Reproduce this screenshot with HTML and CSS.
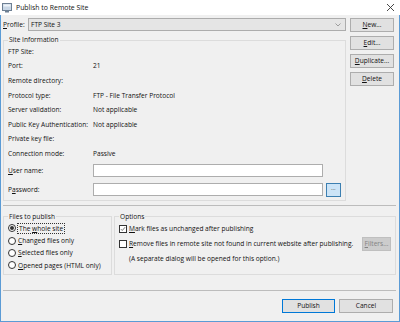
FILE: index.html
```html
<!DOCTYPE html>
<html lang="en">
<head>
  <meta charset="UTF-8" />
  <title>Publish to Remote Site</title>
  <link rel="stylesheet" href="styles.css">
</head>
<body>
  <div class="window">
    <div class="titlebar">
      <svg class="app-icon" width="10" height="10" viewBox="0 0 10 10">
        <rect x="0.5" y="0.5" width="9" height="7" fill="#c9d7e6" stroke="#6d7f93"/>
        <rect x="1.5" y="1.5" width="7" height="2" fill="#eef3f8"/>
        <rect x="3" y="8" width="4" height="1.5" fill="#6d7f93"/>
      </svg>
      <span class="title">Publish to Remote Site</span>
      <svg class="close" width="9" height="9" viewBox="0 0 9 9">
        <path d="M1 1L8 8M8 1L1 8" stroke="#333" stroke-width="0.9"/>
      </svg>
    </div>

    <div class="frame">
      <div class="top">
        <div class="site-col">
          <div class="profile-row">
            <span class="profile-label"><u>P</u>rofile:</span>
            <div class="select">
              <span>FTP Site 3</span>
              <svg width="6" height="4" viewBox="0 0 6 4"><path d="M0.5 0.5L3 3L5.5 0.5" fill="none" stroke="#8a8a8a" stroke-width="0.8"/></svg>
            </div>
          </div>

          <fieldset class="group site-info">
            <legend>Site Information</legend>
            <div class="info-row"><span class="key">FTP Site:</span><span class="val"></span></div>
            <div class="info-row"><span class="key">Port:</span><span class="val">21</span></div>
            <div class="info-row"><span class="key">Remote directory:</span><span class="val"></span></div>
            <div class="info-row"><span class="key">Protocol type:</span><span class="val">FTP - File Transfer Protocol</span></div>
            <div class="info-row"><span class="key">Server validation:</span><span class="val">Not applicable</span></div>
            <div class="info-row"><span class="key">Public Key Authentication:</span><span class="val">Not applicable</span></div>
            <div class="info-row"><span class="key">Private key file:</span><span class="val"></span></div>
            <div class="info-row"><span class="key">Connection mode:</span><span class="val">Passive</span></div>
            <div class="field-row user-row">
              <span class="key"><u>U</u>ser name:</span>
              <input class="text-input" type="text">
            </div>
            <div class="field-row pass-row">
              <span class="key">P<u>a</u>ssword:</span>
              <input class="text-input" type="text">
              <button class="dots-btn">•••</button>
            </div>
          </fieldset>
        </div>

        <div class="side-buttons">
          <button class="btn"><u>N</u>ew...</button>
          <button class="btn"><u>E</u>dit...</button>
          <button class="btn"><u>D</u>uplicate...</button>
          <button class="btn"><u>D</u>elete</button>
        </div>
      </div>

      <div class="separator"></div>

      <div class="groups">
        <fieldset class="group files">
          <legend>Files to publish</legend>
          <div class="radio-row"><span class="radio checked"></span><span class="focus-text">The <u>w</u>hole site</span></div>
          <div class="radio-row"><span class="radio"></span><span><u>C</u>hanged files only</span></div>
          <div class="radio-row"><span class="radio"></span><span><u>S</u>elected files only</span></div>
          <div class="radio-row"><span class="radio"></span><span><u>O</u>pened pages (HTML only)</span></div>
        </fieldset>

        <fieldset class="group options">
          <legend>Options</legend>
          <div class="check-row">
            <span class="checkbox checked">
              <svg width="8" height="8" viewBox="0 0 8 8"><path d="M1.2 4.2L3 6L6.8 1.6" fill="none" stroke="#333" stroke-width="0.9"/></svg>
            </span>
            <span><u>M</u>ark files as unchanged after publishing</span>
          </div>
          <div class="check-row tall">
            <span class="checkbox"></span>
            <span><u>R</u>emove files in remote site not found in current website after publishing.</span>
            <button class="btn disabled"><u>F</u>ilters...</button>
          </div>
          <div class="note">(A separate dialog will be opened for this option.)</div>
        </fieldset>
      </div>

      <div class="separator bottom-sep"></div>

      <div class="footer">
        <button class="btn default">Publish</button>
        <button class="btn cancel">Cancel</button>
      </div>
    </div>
  </div>
</body>
</html>
```

FILE: styles.css
```css
* {
  box-sizing: border-box;
  margin: 0;
  padding: 0;
}

body {
  background: #f0f0f0;
  font-family: 'Open Sans', 'Noto Sans', sans-serif;
  font-size: 6.6px;
  color: #111;
  overflow: hidden;
}

u {
  text-decoration-thickness: 0.6px;
  text-underline-offset: 1px;
}

.window {
  width: 400px;
  height: 322px;
  display: flex;
  flex-direction: column;
}

/* title bar */
.titlebar {
  height: 15px;
  background: #fff;
  display: flex;
  align-items: center;
  padding: 0 3px 0 2px;
}

.app-icon {
  display: block;
}

.title {
  margin-left: 4px;
  font-size: 6.9px;
  flex: 1;
}

.close {
  display: block;
  margin-right: 2px;
}

/* dialog body */
.frame {
  flex: 1;
  background: #f0f0f0;
  border: 1px solid #5b9bd5;
  border-top: none;
  padding: 3px 3px 0 2px;
  display: flex;
  flex-direction: column;
}

.top {
  display: flex;
  gap: 4px;
}

.site-col {
  width: 343px;
}

.profile-row {
  display: flex;
  align-items: center;
  height: 13px;
}

.profile-label {
  width: 25px;
}

.select {
  flex: 1;
  height: 13px;
  background: #e5e5e5;
  border: 1px solid #acacac;
  display: flex;
  align-items: center;
  justify-content: space-between;
  padding: 0 4px 0 2px;
}

.group {
  border: 1px solid #dcdcdc;
  min-width: 0;
  padding: 0 4px;
}

.group legend {
  padding: 0 1px;
  line-height: 8px;
}

.site-info {
  margin-top: 5px;
  padding-bottom: 3px;
}

.info-row {
  display: flex;
  align-items: center;
  height: 14.6px;
}

.key {
  width: 85px;
  flex-shrink: 0;
}

.field-row {
  display: flex;
  align-items: center;
}

.user-row {
  margin-top: 3px;
  height: 13px;
}

.pass-row {
  margin-top: 6px;
  height: 14px;
}

.text-input {
  width: 230px;
  height: 13px;
  background: #fff;
  border: 1px solid #adadad;
  outline: none;
}

.dots-btn {
  width: 15px;
  height: 14px;
  margin-left: 3px;
  background: #cce4f7;
  border: 1px solid #3c7fb1;
  color: #6a6a6a;
  font-size: 3px;
  letter-spacing: 0.3px;
  font-family: inherit;
}

.side-buttons {
  width: 44px;
  display: flex;
  flex-direction: column;
  gap: 4px;
}

.btn {
  height: 14px;
  background: #e1e1e1;
  border: 1px solid #adadad;
  font-family: inherit;
  font-size: 6.6px;
  color: #111;
  line-height: 12px;
  white-space: nowrap;
}

.separator {
  height: 1px;
  background: #bcbcbc;
  margin-top: 4px;
}

.groups {
  display: flex;
  gap: 2px;
  margin-top: 7px;
}

.files {
  width: 109px;
  padding-top: 1.5px;
  padding-bottom: 2.5px;
}

.radio-row {
  display: flex;
  align-items: center;
  height: 12.3px;
  gap: 2px;
  white-space: nowrap;
}

.radio {
  width: 8px;
  height: 8px;
  border: 1px solid #333;
  border-radius: 50%;
  background: #fff;
  display: flex;
  align-items: center;
  justify-content: center;
}

.radio.checked::after {
  content: '';
  width: 4px;
  height: 4px;
  border-radius: 50%;
  background: #333;
}

.focus-text {
  outline: 1px dotted #333;
  padding: 0 1px;
}

.options {
  flex: 1;
  padding-top: 2px;
}

.check-row {
  display: flex;
  align-items: center;
  height: 12px;
  gap: 2px;
  white-space: nowrap;
}

.check-row.tall {
  height: 14px;
  margin-top: 2px;
}

.checkbox {
  width: 8px;
  height: 8px;
  flex-shrink: 0;
  border: 1px solid #333;
  background: #fff;
  display: flex;
  align-items: center;
  justify-content: center;
}

.checkbox svg {
  display: block;
  width: 6px;
  height: 6px;
}

.btn.disabled {
  margin-left: auto;
  width: 29px;
  flex-shrink: 0;
  background: #cccccc;
  border-color: #bfbfbf;
  color: #838383;
}

.note {
  margin-top: 2px;
  height: 12px;
  line-height: 12px;
  padding-left: 10px;
}

.bottom-sep {
  margin-top: 15px;
}

.footer {
  display: flex;
  justify-content: flex-end;
  gap: 4px;
  padding: 8px 3px 0 0;
}

.footer .btn {
  width: 53px;
}

.footer .cancel {
  width: 54px;
}

.btn.default {
  border-color: #0078d7;
}
```
